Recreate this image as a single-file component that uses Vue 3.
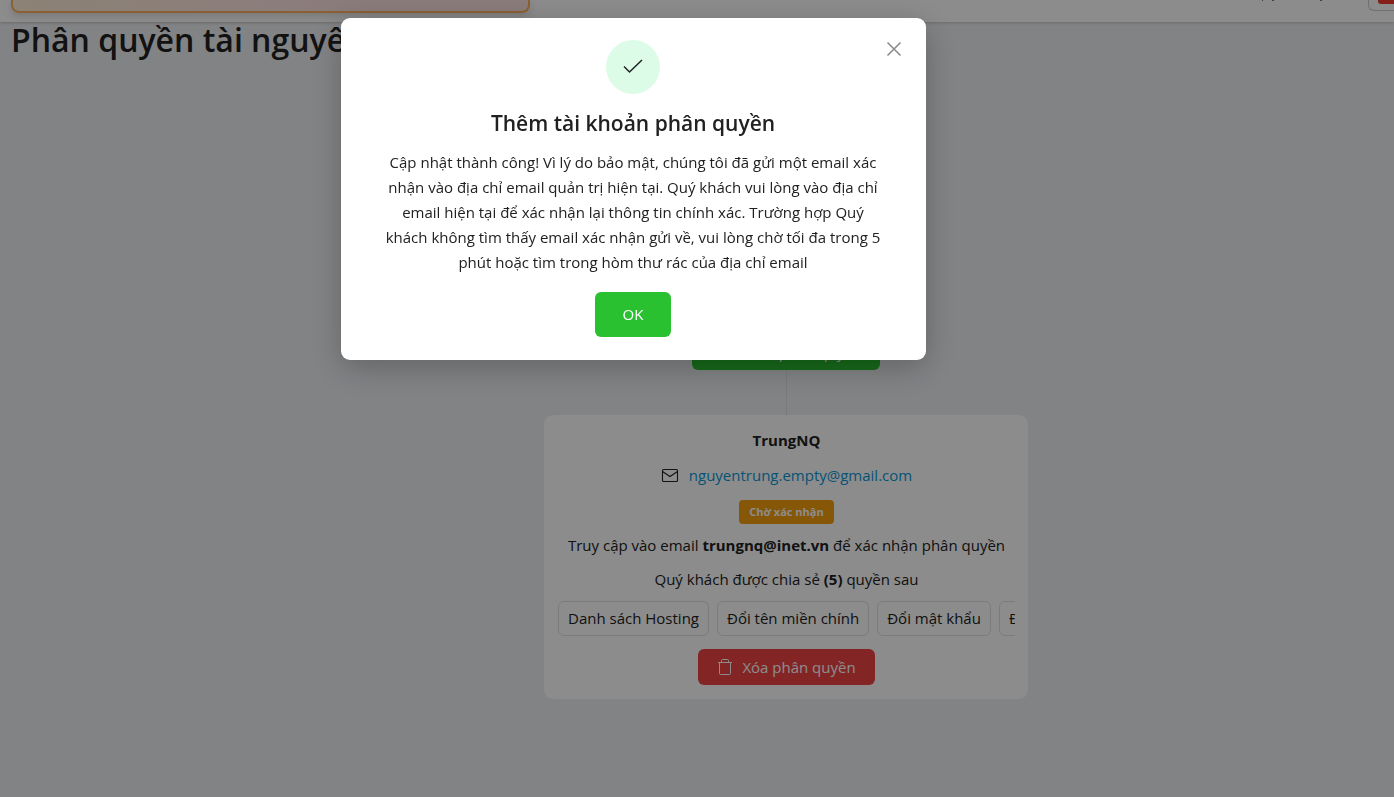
<template>
  <div class="page">
    <!-- Thanh trên cùng -->
    <header class="topbar">
      <div class="promo"></div>
      <div class="topbar-right">
        <svg class="hint" width="60" height="1" viewBox="0 0 60 1" aria-hidden="true">
          <path d="M0 0h1v1h-1zM10 0h2v1h-2zM58 0h2v1h-2z" fill="#777" />
        </svg>
        <button class="lang-btn" type="button" aria-label="Ngôn ngữ">
          <span class="flag"></span>
        </button>
      </div>
    </header>

    <main class="content">
      <h1 class="page-title">Phân quyền tài nguyên</h1>

      <section class="tree">
        <button class="btn btn-add" type="button">
          <svg width="16" height="16" viewBox="0 0 16 16" fill="none" stroke="currentColor" aria-hidden="true">
            <path d="M8 2v12M2 8h12" />
          </svg>
          Thêm phân quyền
        </button>
        <div class="connector"></div>

        <article class="member">
          <h2 class="member-name">{{ member.name }}</h2>
          <div class="member-email">
            <svg width="18" height="18" viewBox="0 0 18 18" fill="none" stroke="currentColor" stroke-width="1.1" aria-hidden="true">
              <rect x="1.5" y="3.5" width="15" height="12" rx="1" />
              <path d="M1.5 5.5 9 10.5l7.5-5" />
            </svg>
            <a :href="`mailto:${member.email}`">{{ member.email }}</a>
          </div>
          <span class="tag">Chờ xác nhận</span>
          <p class="note">Truy cập vào email <b>{{ member.owner }}</b> để xác nhận phân quyền</p>
          <p class="note">Quý khách được chia sẻ <b>({{ total }})</b> quyền sau</p>
          <ul class="permissions">
            <li v-for="item in permissions" :key="item">{{ item }}</li>
          </ul>
          <button class="btn btn-delete" type="button">
            <svg width="16" height="18" viewBox="0 0 16 18" fill="none" stroke="currentColor" aria-hidden="true">
              <path d="M1 4.5h14M4.5 4.5v-2q0-1 1-1h5q1 0 1 1v2M2.5 4.5v11q0 1 1 1h9q1 0 1-1v-11" />
            </svg>
            Xóa phân quyền
          </button>
        </article>
      </section>
    </main>

    <!-- Hộp thoại thông báo -->
    <div v-if="isOpen" class="overlay">
      <div class="modal" role="dialog" aria-modal="true" aria-labelledby="modal-title">
        <button class="close" type="button" aria-label="Đóng" @click="close">
          <svg width="16" height="16" viewBox="0 0 16 16" fill="none" stroke="currentColor" stroke-width="1.6" aria-hidden="true">
            <path d="M1.5 1.5l13 13M14.5 1.5l-13 13" />
          </svg>
        </button>
        <div class="success">
          <svg width="20" height="16" viewBox="0 0 20 16" fill="none" stroke="currentColor" stroke-width="1.5" aria-hidden="true">
            <path d="M1 7.5l5.5 5.5L19 1" />
          </svg>
        </div>
        <h2 id="modal-title" class="modal-title">Thêm tài khoản phân quyền</h2>
        <p class="modal-text">{{ message }}</p>
        <button class="btn-ok" type="button" @click="close">OK</button>
      </div>
    </div>
  </div>
</template>

<script setup>
import { ref } from 'vue'

const isOpen = ref(true)

const member = {
  name: 'TrungNQ',
  email: 'nguyentrung.empty@gmail.com',
  owner: 'trungnq@inet.vn'
}

const total = 5

const permissions = [
  'Danh sách Hosting',
  'Đổi tên miền chính',
  'Đổi mật khẩu',
  'Đ'
]

const message =
  'Cập nhật thành công! Vì lý do bảo mật, chúng tôi đã gửi một email xác nhận vào địa chỉ email quản trị hiện tại. ' +
  'Quý khách vui lòng vào địa chỉ email hiện tại để xác nhận lại thông tin chính xác. ' +
  'Trường hợp Quý khách không tìm thấy email xác nhận gửi về, vui lòng chờ tối đa trong 5 phút hoặc tìm trong hòm thư rác của địa chỉ email'

function close() {
  isOpen.value = false
}
</script>

<style>
body {
  margin: 0;
  background: #edeff3;
}
</style>

<style scoped>
.page {
  min-height: 100vh;
  background: #edeff3;
  color: #212121;
  font-family: 'Segoe UI', 'Open Sans', 'Noto Sans', sans-serif;
  font-size: 15px;
  line-height: 24px;
}

h1,
h2,
p,
ul {
  margin: 0;
  padding: 0;
}

button {
  font: inherit;
  cursor: pointer;
}

.topbar {
  display: flex;
  justify-content: space-between;
  align-items: flex-start;
  height: 22px;
  padding-left: 11px;
  background: #fff;
  box-shadow: 0 1px 3px rgba(0, 0, 0, 0.2);
}

.promo {
  box-sizing: border-box;
  width: 519px;
  height: 13px;
  border: 2px solid #fdae60;
  border-top: none;
  border-radius: 0 0 8px 8px;
  background: linear-gradient(90deg, #ffedd5, #fee2e2 60%);
  box-shadow: 0 3px 8px rgba(0, 0, 0, 0.15);
}

.topbar-right {
  display: flex;
  align-items: flex-start;
  gap: 46px;
}

.lang-btn {
  box-sizing: border-box;
  display: flex;
  align-items: flex-start;
  width: 26px;
  height: 11px;
  padding: 0 0 0 9px;
  border: 1px solid #ccc;
  border-width: 0 0 1px 1px;
  border-radius: 0 0 0 6px;
  background: #fff;
}

.flag {
  width: 16px;
  height: 4px;
  border-radius: 0 0 0 3px;
  background: #f03a2e;
}

.page-title {
  padding-left: 11px;
  font-size: 32px;
  font-weight: 600;
  line-height: 36px;
}

.tree {
  display: flex;
  flex-direction: column;
  align-items: center;
  margin: 276px 0 0 178px;
}

.btn {
  display: flex;
  align-items: center;
  gap: 9px;
  height: 36px;
  padding: 0 18px;
  border: none;
  border-radius: 6px;
  color: #fff;
}

.btn-add {
  background: #2ac131;
}

.btn-delete {
  padding: 0 19px;
  background: #ef4444;
}

.connector {
  width: 1px;
  height: 45px;
  background: #dcdfe3;
}

.member {
  box-sizing: border-box;
  display: flex;
  flex-direction: column;
  align-items: center;
  width: 100%;
  max-width: 484px;
  padding: 13px 13px 14px 14px;
  border-radius: 9px;
  background: #fff;
}

.member-name {
  font-size: 15px;
  font-weight: 700;
}

.member-email {
  display: flex;
  align-items: center;
  gap: 10px;
  margin: 11px 0 13px;
}

.member-email a {
  color: #0e97d6;
  text-decoration: none;
}

.tag {
  margin-bottom: 9px;
  padding: 0 10px;
  border-radius: 4px;
  background: #f59e0b;
  color: #fff;
  font-size: 11px;
  font-weight: 700;
}

.note {
  margin-bottom: 10px;
}

.permissions {
  display: flex;
  gap: 8px;
  width: 100%;
  margin-bottom: 13px;
  overflow: hidden;
  list-style: none;
}

.permissions li {
  flex: none;
  padding: 5px 9px;
  border: 1px solid #dfe1e5;
  border-radius: 6px;
  line-height: 23px;
}

.overlay {
  position: fixed;
  inset: 0;
  display: flex;
  justify-content: center;
  align-items: flex-start;
  padding: 18px 127px 0 0;
  background: rgba(0, 0, 0, 0.45);
}

.modal {
  position: relative;
  box-sizing: border-box;
  display: flex;
  flex-direction: column;
  align-items: center;
  width: 100%;
  max-width: 585px;
  padding: 22px 41px 23px 40px;
  border-radius: 9px;
  background: #fff;
  box-shadow: 0 8px 32px rgba(0, 0, 0, 0.25);
  text-align: center;
}

.close {
  position: absolute;
  top: 23px;
  right: 24px;
  display: flex;
  padding: 0;
  border: none;
  background: none;
  color: #8c8c8c;
}

.success {
  display: flex;
  align-items: center;
  justify-content: center;
  width: 54px;
  height: 54px;
  border-radius: 50%;
  background: #dcfce7;
}

.modal-title {
  margin-top: 13px;
  font-size: 21px;
  font-weight: 600;
  line-height: 32px;
}

.modal-text {
  margin: 11px 0 17px;
  line-height: 25px;
}

.btn-ok {
  width: 76px;
  height: 45px;
  padding: 0 0 2px;
  border: none;
  border-radius: 6px;
  background: #2ac131;
  color: #fff;
  font-weight: 500;
}
</style>
